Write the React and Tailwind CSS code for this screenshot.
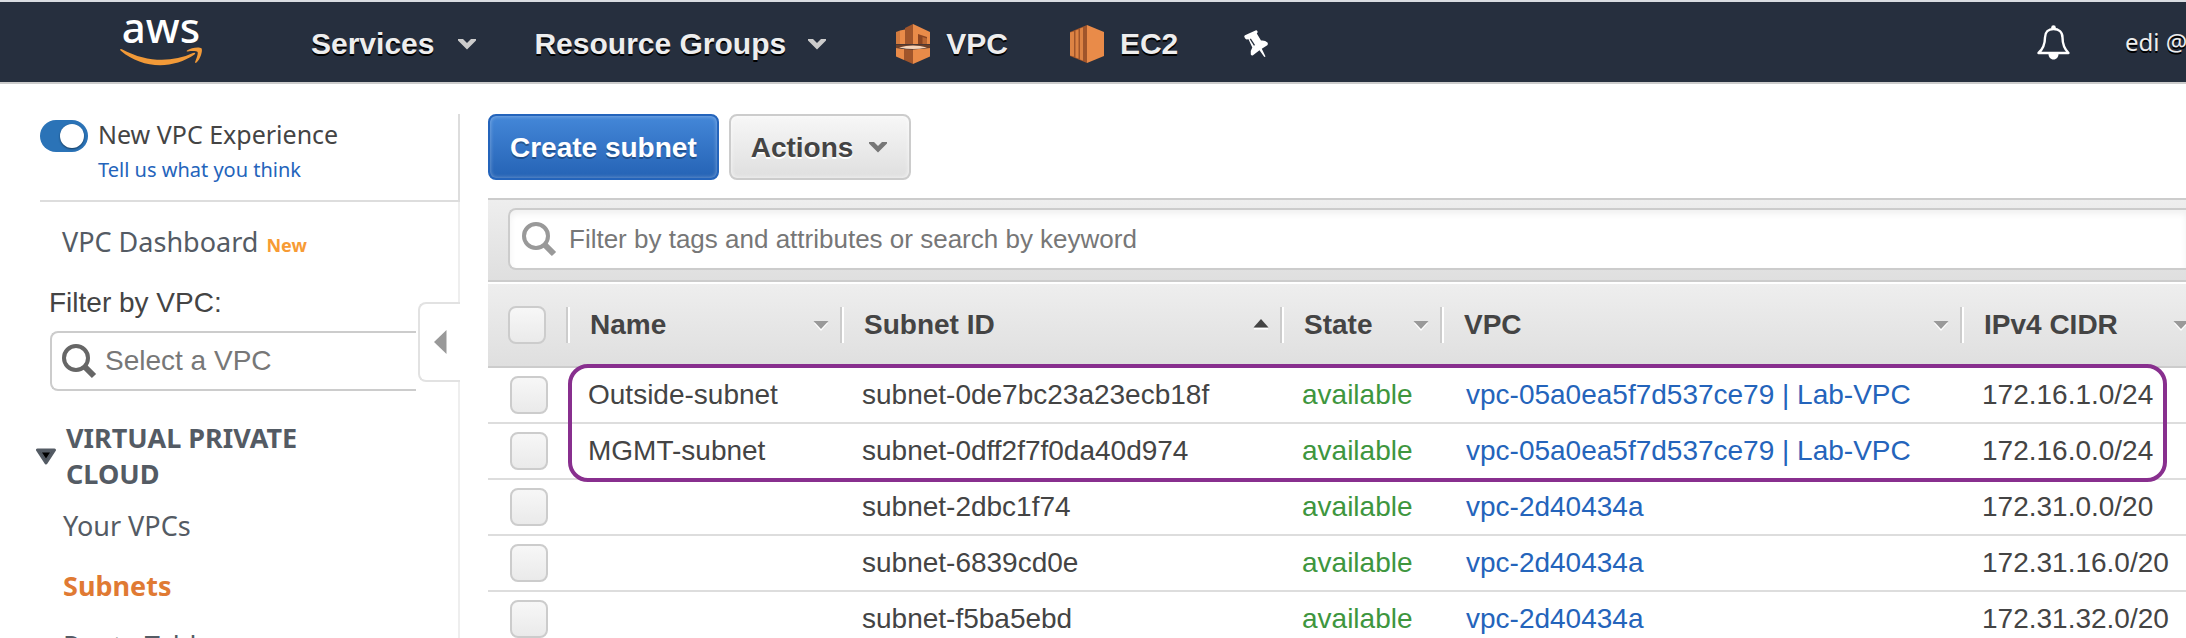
const subnets = [
  { name: "Outside-subnet", id: "subnet-0de7bc23a23ecb18f", vpc: "vpc-05a0ea5f7d537ce79 | Lab-VPC", cidr: "172.16.1.0/24" },
  { name: "MGMT-subnet", id: "subnet-0dff2f7f0da40d974", vpc: "vpc-05a0ea5f7d537ce79 | Lab-VPC", cidr: "172.16.0.0/24" },
  { name: "", id: "subnet-2dbc1f74", vpc: "vpc-2d40434a", cidr: "172.31.0.0/20" },
  { name: "", id: "subnet-6839cd0e", vpc: "vpc-2d40434a", cidr: "172.31.16.0/20" },
  { name: "", id: "subnet-f5ba5ebd", vpc: "vpc-2d40434a", cidr: "172.31.32.0/20" },
];

const columns = [
  { label: "Name", sort: "none" },
  { label: "Subnet ID", sort: "ascending" },
  { label: "State", sort: "none" },
  { label: "VPC", sort: "none" },
  { label: "IPv4 CIDR", sort: "none" },
];

const ember = "font-['Noto_Sans','Open_Sans',sans-serif]";
const navText = "text-[30px] leading-9 font-bold text-[#eeeeee] [text-shadow:0_2px_0_#000]";

function AwsLogo() {
  return (
    <a href="#home" aria-label="AWS home" className="block shrink-0">
      <svg width="84" height="80" viewBox="0 0 84 80">
        <text x="41" y="41" textAnchor="middle" fill="#fff" fontFamily="'Noto Sans','Open Sans',sans-serif" fontWeight="500" fontSize="42">
          aws
        </text>
        <path
          d="M0 47.600Q.6 46.400 2.400 47.400C27 60.500 52 60.500 73 51Q76.500 50 74.500 52.600C53 67.500 22 67 .8 48.800Q0 48.200 0 47.600Z"
          fill="#f29a38"
        />
        <path
          d="M67 48.400C71 45.500 79 44.800 81.500 46.200C83 48.500 80.500 57 76.500 60.600C75.300 61.300 74.800 60.600 75.200 59.800C76.500 56.500 78.300 51.500 77.600 50C76.600 48.600 71 49 68 49.400C66.600 49.500 66.300 49 67 48.400Z"
          fill="#f29a38"
        />
      </svg>
    </a>
  );
}

function Chevron({ color }) {
  return (
    <svg width="18" height="12" viewBox="0 0 18 12" aria-hidden="true">
      <path d="M0 1H5L9 5L13 1H18V2.500L9 11.500L0 2.500Z" fill={color} />
    </svg>
  );
}

function VpcIcon() {
  return (
    <svg width="34" height="40" viewBox="0 0 34 40" aria-hidden="true">
      <path d="M0 8L4 6.500V20H0Z" fill="#d27b3f" />
      <path d="M4 6.500L9 5.500V20H4Z" fill="#e98b49" />
      <path d="M9 4L17 0V20H9Z" fill="#a0552b" />
      <path d="M17 0L34 8V20H17Z" fill="#e98b49" />
      <path d="M22 10L31 13V20H22Z" fill="#8b4522" />
      <path d="M26.500 13L31 14.500V20H26.500Z" fill="#b96633" />
      <path d="M0 20.500H34V24H0Z" fill="#6e4028" />
      <path d="M3 23.500Q17 19.500 31 23.500Q17 26.500 3 23.500Z" fill="#f6d3b8" />
      <path d="M0 24L8 25V36L0 32.500Z" fill="#e98b49" />
      <path d="M8 25L17 25.500V40L8 36Z" fill="#a0552b" />
      <path d="M17 25.500L34 24V32.500L17 40Z" fill="#e98b49" />
    </svg>
  );
}

function Ec2Icon() {
  return (
    <svg width="34" height="38" viewBox="0 0 34 38" aria-hidden="true">
      <path d="M0 7L17 0V38L0 31Z" fill="#a0552b" />
      <path d="M0 7.500L4 6.500V31.500L0 30.500Z" fill="#dd8344" />
      <path d="M5.500 5.500L8.500 4.500V33.500L5.500 32.500Z" fill="#dd8344" />
      <path d="M10 3.500L13 2.500V35.500L10 34.500Z" fill="#dd8344" />
      <path d="M17 0L34 7V31L17 38Z" fill="#e98b49" />
    </svg>
  );
}

function PinIcon() {
  return (
    <svg width="25" height="28" viewBox="0 0 25 28" aria-hidden="true">
      <path
        d="M.3 6.800Q0 5.800 1 5.200L11.500 .4Q12.800 0 13.500 1.200Q14 2.500 12.800 3.500L17 10.500Q21 10 23.500 12.500Q24.500 14 23.300 15.200L17.800 18.800L21.500 26.500L20.300 27L15.500 20.300L9 25.300Q7.500 26 6.800 24.500Q6 21 8.300 17.500L4.500 9.300L2.500 9.500Q.9 9 .3 6.800Z"
        fill="#fff"
      />
      <path d="M6.300 8.800L10.500 15.300" stroke="#262f3e" strokeWidth="1.300" />
    </svg>
  );
}

function BellIcon() {
  return (
    <svg width="34" height="35" viewBox="0 0 34 35" aria-hidden="true">
      <circle cx="16.500" cy="2.500" r="2.300" fill="#fff" />
      <path
        d="M1.500 28C6 24 8 19 8 12.500C8 7 11.500 4 16.500 4C21.500 4 25.500 7 25.500 12.500C25.500 19 27.500 24 31.500 28Z"
        fill="none"
        stroke="#fff"
        strokeWidth="2.400"
        strokeLinejoin="round"
      />
      <path d="M11.500 29H21.500C21.500 32 19.500 34.500 16.500 34.500S11.500 32 11.500 29Z" fill="#fff" />
    </svg>
  );
}

function SearchIcon({ color }) {
  return (
    <svg width="35" height="35" viewBox="0 0 35 35" className="shrink-0" aria-hidden="true">
      <circle cx="14" cy="14" r="12" fill="none" stroke={color} strokeWidth="4" />
      <path d="M22 22L32 32" stroke={color} strokeWidth="6" />
    </svg>
  );
}

function SortArrow({ sort }) {
  return sort === "ascending" ? (
    <svg width="16" height="12" viewBox="0 0 16 12" aria-hidden="true">
      <path d="M1 9H15V10.500H1Z" fill="#fff" />
      <path d="M8 0L15.500 8.500H.5Z" fill="#444" />
    </svg>
  ) : (
    <svg width="16" height="12" viewBox="0 0 16 12" aria-hidden="true">
      <path d="M8 12L15 4H1Z" fill="#fff" />
      <path d="M.5 2H15.500L8 10Z" fill="#999" />
    </svg>
  );
}

function Checkbox({ label }) {
  return (
    <input
      type="checkbox"
      aria-label={label}
      className="block size-[38px] appearance-none rounded-lg border-2 border-[#cccccc] bg-linear-to-b from-[#f7f7f7] to-[#eaeaea]"
    />
  );
}

function Header() {
  return (
    <header className="flex h-21 shrink-0 items-center overflow-hidden border-t-2 border-b-2 border-t-[#d9dce1] border-b-[#cccccc] bg-[#262f3e] pl-[120px]">
      <AwsLogo />
      <nav aria-label="Main" className="flex items-center pt-1">
        <button type="button" className={`ml-[107px] flex items-center gap-6 ${navText}`}>
          Services <Chevron color="#cccccc" />
        </button>
        <button type="button" className={`ml-[58px] flex items-center gap-[22px] ${navText}`}>
          Resource Groups <Chevron color="#cccccc" />
        </button>
        <a href="#vpc" className={`ml-[70px] flex items-center gap-4 ${navText}`}>
          <VpcIcon /> VPC
        </a>
        <a href="#ec2" className={`ml-[62px] flex items-center gap-4 ${navText}`}>
          <Ec2Icon /> EC2
        </a>
        <button type="button" aria-label="Pin shortcuts" className="ml-[66px]">
          <PinIcon />
        </button>
      </nav>
      <button type="button" aria-label="Notifications" className="ml-auto shrink-0">
        <BellIcon />
      </button>
      <button
        type="button"
        className={`ml-[54px] w-[61px] shrink-0 overflow-hidden text-left text-[24px] leading-9 whitespace-nowrap text-[#eeeeee] [text-shadow:0_2px_0_#000] ${ember}`}
      >
        edi @
      </button>
    </header>
  );
}

function Sidebar() {
  return (
    <aside className="relative flex w-[460px] shrink-0 flex-col pt-[30px]">
      <div className="ml-10 flex h-22 shrink-0 gap-2.5 border-r-2 border-b-2 border-[#dddddd]">
        <input
          id="new-experience"
          type="checkbox"
          role="switch"
          defaultChecked
          className="mt-1.5 h-8 w-12 shrink-0 appearance-none rounded-full bg-[#2b73b7] before:mt-1 before:ml-5 before:block before:size-6 before:rounded-full before:bg-white before:shadow-[0_1px_2px_rgba(0,0,0,0.5)]"
        />
        <div className={`flex flex-col ${ember}`}>
          <label htmlFor="new-experience" className="text-[25px] leading-10 whitespace-nowrap text-[#444444]">
            New VPC Experience
          </label>
          <a href="#feedback" className="text-[20px] leading-8 whitespace-nowrap text-[#2464bb]">
            Tell us what you think
          </a>
        </div>
      </div>
      <div className="flex flex-1 shrink-0 flex-col border-r-2 border-[#eeeeee] pt-[22px]">
        <a href="#dashboard" className={`ml-[62px] flex items-baseline gap-2 text-[27px] leading-9 text-[#545b64] ${ember}`}>
          VPC Dashboard <span className="text-[18px] font-bold text-[#f79b34]">New</span>
        </a>
        <label htmlFor="vpc-filter" className="mt-[22px] ml-[49px] text-[28px] leading-9 text-[#444444]">
          Filter by VPC:
        </label>
        <div className="mt-2.5 mr-[42px] ml-[50px] flex h-15 shrink-0 items-center gap-2 rounded-l-lg border-2 border-r-0 border-[#cccccc] pl-2.5">
          <SearchIcon color="#666666" />
          <input
            id="vpc-filter"
            type="text"
            placeholder="Select a VPC"
            className="w-full min-w-0 bg-transparent text-[28px] leading-9 outline-none placeholder:text-[#777777]"
          />
        </div>
        <nav aria-label="Virtual private cloud" className={`mt-[29px] text-[27px] leading-9 text-[#545b64] ${ember}`}>
          <button type="button" className="flex w-[320px] items-center gap-2.5 pl-9 text-left font-bold">
            <svg width="20" height="17" viewBox="0 0 20 17" className="shrink-0" aria-hidden="true">
              <path d="M1.500 2H18.500L10 15Z" fill="#000" stroke="#545b64" strokeWidth="3" strokeLinejoin="round" />
              <path d="M3.500 3H16.500L10 13Z" fill="#545b64" />
              <path d="M6 4.500H14L10 10.500Z" fill="#000" />
            </svg>
            VIRTUAL PRIVATE CLOUD
          </button>
          <ul className="mt-4 flex flex-col gap-6 pl-[63px] whitespace-nowrap">
            <li><a href="#vpcs">Your VPCs</a></li>
            <li><a href="#subnets" aria-current="page" className="font-bold text-[#e07a33]">Subnets</a></li>
            <li><a href="#routes">Route Tables</a></li>
          </ul>
        </nav>
      </div>
      <button
        type="button"
        aria-label="Collapse sidebar"
        className="absolute top-[218px] right-0 flex h-20 w-[42px] items-center rounded-l-lg border-2 border-r-0 border-[#e2e2e2] bg-white pl-3.5"
      >
        <svg width="13" height="24" viewBox="0 0 13 24" aria-hidden="true">
          <path d="M12.500 0V24L0 12Z" fill="#999" />
        </svg>
      </button>
    </aside>
  );
}

function SubnetTable() {
  return (
    <div className="relative overflow-hidden">
      <table className="w-[calc(100%+14px)] table-fixed border-separate border-spacing-0 text-left text-[28px] leading-9 whitespace-nowrap text-[#444444]">
        <colgroup>
          <col className="w-[78px]" />
          <col className="w-[274px]" />
          <col className="w-[440px]" />
          <col className="w-[160px]" />
          <col />
          <col className="w-[240px]" />
        </colgroup>
        <thead>
          <tr>
            <th className="h-[84px] border-b-2 border-[#cccccc] bg-linear-to-b from-[#eeeeee] to-[#dfdfdf] p-0 pl-5">
              <Checkbox label="Select all subnets" />
            </th>
            {columns.map((c) => (
              <th
                key={c.label}
                aria-sort={c.sort}
                className="border-b-2 border-[#cccccc] bg-linear-to-b from-[#eeeeee] to-[#dfdfdf] p-0"
              >
                <button
                  type="button"
                  className="flex h-9 w-full items-center justify-between border-l-2 border-[#cccccc] pr-[11px] font-bold shadow-[inset_2px_0_0_#fff]"
                >
                  <span className="pl-[22px]">{c.label}</span>
                  <SortArrow sort={c.sort} />
                </button>
              </th>
            ))}
          </tr>
        </thead>
        <tbody className="[&_td]:h-14 [&_td]:border-b-2 [&_td]:border-[#dddddd] [&_td]:p-0 [&_td]:pl-[22px]">
          {subnets.map((s) => (
            <tr key={s.id}>
              <td>
                <Checkbox label={`Select ${s.id}`} />
              </td>
              <td>{s.name}</td>
              <td>{s.id}</td>
              <td className="text-[#3e963e]">available</td>
              <td>
                <a href="#vpc" className="ml-1 text-[#2464bb]">{s.vpc}</a>
              </td>
              <td>{s.cidr}</td>
            </tr>
          ))}
        </tbody>
      </table>
      <div className="pointer-events-none absolute top-20 right-[19px] left-20 h-[118px] rounded-[20px] border-4 border-[#882f8e]" />
    </div>
  );
}

export default function App() {
  return (
    <div className="flex h-screen flex-col overflow-hidden bg-white font-['Liberation_Sans',Arial,sans-serif]">
      <Header />
      <div className="flex min-h-0 flex-1">
        <Sidebar />
        <main className="ml-7 min-w-0 flex-1 pt-[30px]">
          <div className="flex gap-2.5 text-[28px] leading-9 font-bold">
            <button
              type="button"
              className="h-[66px] rounded-lg border-2 border-[#2464bb] bg-linear-to-b from-[#4487d8] to-[#2563b5] px-5 pt-0.5 text-white shadow-[inset_0_0_4px_rgba(255,255,255,0.4)] [text-shadow:0_2px_0_rgba(0,0,0,0.3)]"
            >
              Create subnet
            </button>
            <button
              type="button"
              className="flex h-[66px] items-center gap-4 rounded-lg border-2 border-[#cccccc] bg-linear-to-b from-[#f7f7f7] to-[#dfdfdf] pr-[22px] pl-5 text-[#444444] shadow-[inset_0_0_4px_rgba(255,255,255,0.8)] [text-shadow:0_2px_0_#fff]"
            >
              <span className="pt-0.5">Actions</span> <Chevron color="#777777" />
            </button>
          </div>
          <div className="mt-[18px] border-t-2 border-b-2 border-[#cccccc] bg-linear-to-b from-[#eeeeee] to-[#dfdfdf] pt-2 pb-2.5 pl-5">
            <div className="flex h-[62px] items-center gap-3 rounded-l-lg border-2 border-r-0 border-[#cccccc] bg-white pl-3 shadow-[inset_0_4px_6px_rgba(0,0,0,0.06)]">
              <SearchIcon color="#999999" />
              <input
                type="text"
                aria-label="Filter subnets"
                placeholder="Filter by tags and attributes or search by keyword"
                className="w-full min-w-0 bg-transparent text-[26px] leading-9 outline-none placeholder:text-[#777777]"
              />
            </div>
          </div>
          <div className="border-t-2 border-white">
            <SubnetTable />
          </div>
        </main>
      </div>
    </div>
  );
}
